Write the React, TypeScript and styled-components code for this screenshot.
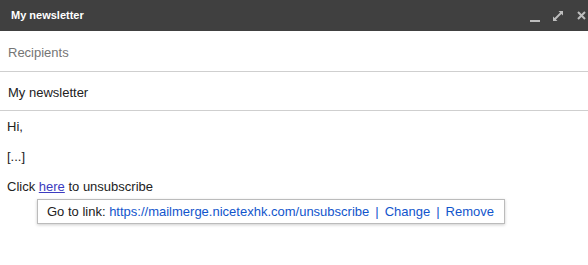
import React from 'react';
import styled, { createGlobalStyle } from 'styled-components';

const GlobalStyle = createGlobalStyle`
  html, body { margin: 0; padding: 0; background: #fff; }
  body { font-family: "Liberation Sans", Arial, sans-serif; }
`

const Window = styled.div`
  width: 588px;
  height: 265px;
  display: flex;
  flex-direction: column;
  background: #fff;
  overflow: hidden;
`

const TitleBar = styled.div`
  height: 31px;
  background: #404040;
  display: flex;
  align-items: center;
  justify-content: space-between;
  padding: 0 0 2px 11px;
  box-sizing: border-box;
`

const Title = styled.span`
  color: #fff;
  font-size: 11px;
  font-weight: bold;
`

const Controls = styled.div`
  display: flex;
  align-items: center;
  gap: 9px;
  margin-top: 2px;
`

const IconBtn = styled.span`
  width: 14px;
  height: 14px;
  display: flex;
  align-items: center;
  justify-content: center;
`

const FieldRow = styled.div<{ first?: boolean; shift?: number }>`
  height: 39px;
  display: flex;
  align-items: center;
  padding: ${(p) => p.shift || 0}px 8px 0;
  box-sizing: border-box;
  margin-top: ${(p) => (p.first ? '2px' : '0')};
  border-bottom: 1px solid #cfcfcf;
  font-size: 13px;
`

const Placeholder = styled.span`
  color: #757575;
`

const Subject = styled.span`
  color: #222;
`

const Body = styled.div`
  padding: 8px 7px;
  font-size: 13px;
  color: #222;
  display: flex;
  flex-direction: column;
  gap: 14px;
`

const Line = styled.div`
  line-height: 16px;
  position: relative;
`

const Here = styled.a`
  color: #3c3cc0;
  text-decoration: underline;
`

const LinkBubble = styled.div`
  position: absolute;
  left: 30px;
  top: 20px;
  width: 468px;
  height: 25px;
  box-sizing: border-box;
  background: #fff;
  border: 1px solid #bbb;
  box-shadow: 0 1px 3px rgba(0, 0, 0, 0.2);
  display: flex;
  align-items: center;
  padding: 0 9px;
  white-space: nowrap;
  color: #222;
`

const BubbleLink = styled.a`
  color: #1155cc;
  text-decoration: none;
`

const Sep = styled.span`
  color: #1155cc;
  margin: 0 6px;
`

const App = () => {
  return (
    <>
      <GlobalStyle />
      <Window>
        <TitleBar>
          <Title>My newsletter</Title>
          <Controls>
            <IconBtn>
              <svg width="10" height="14" viewBox="0 0 10 14">
                <rect x="0" y="11" width="10" height="2" fill="#bdbdbd" />
              </svg>
            </IconBtn>
            <IconBtn>
              <svg width="10" height="10" viewBox="0 0 10 10">
                <path d="M5.5 0H10v4.5L8.4 2.9 2.9 8.4 4.5 10H0V5.5l1.6 1.6 5.5-5.5z" fill="#bdbdbd" />
              </svg>
            </IconBtn>
            <IconBtn>
              <svg width="9" height="9" viewBox="0 0 9 9">
                <path d="M1 1l7 7M8 1L1 8" stroke="#bdbdbd" strokeWidth="2" />
              </svg>
            </IconBtn>
          </Controls>
        </TitleBar>
        <FieldRow first>
          <Placeholder>Recipients</Placeholder>
        </FieldRow>
        <FieldRow shift={3}>
          <Subject>My newsletter</Subject>
        </FieldRow>
        <Body>
          <Line>Hi,</Line>
          <Line>[...]</Line>
          <Line>
            Click <Here href="#">here</Here> to unsubscribe
            <LinkBubble>
              Go to link:&nbsp;
              <BubbleLink href="#">https://mailmerge.nicetexhk.com/unsubscribe</BubbleLink>
              <Sep>|</Sep>
              <BubbleLink href="#">Change</BubbleLink>
              <Sep>|</Sep>
              <BubbleLink href="#">Remove</BubbleLink>
            </LinkBubble>
          </Line>
        </Body>
      </Window>
    </>
  );
};

export default App;
